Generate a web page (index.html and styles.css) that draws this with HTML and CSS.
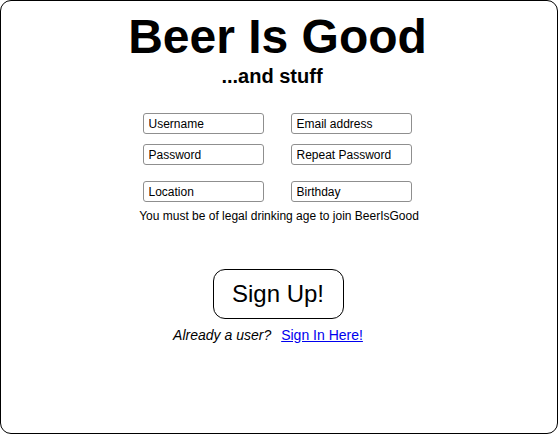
FILE: index.html
```html
<!DOCTYPE html>
<html>
<head>
<meta charset="utf-8">
<link rel="stylesheet" href="styles.css">
</head>
<body>
<div class="card">
  <h1 class="title">Beer Is Good</h1>
  <h2 class="subtitle">...and stuff</h2>
  <form class="form">
    <div class="grid">
      <input class="field" type="text" placeholder="Username">
      <input class="field" type="text" placeholder="Email address">
      <input class="field" type="password" placeholder="Password">
      <input class="field" type="password" placeholder="Repeat Password">
      <input class="field row3" type="text" placeholder="Location">
      <input class="field row3" type="text" placeholder="Birthday">
    </div>
    <p class="note">You must be of legal drinking age to join BeerIsGood</p>
    <button class="signup" type="button">Sign Up!</button>
    <p class="already"><em>Already a user?</em><a href="#" class="link">Sign In Here!</a></p>
  </form>
</div>
</body>
</html>
```
FILE: styles.css
```css
html, body {
  margin: 0;
  padding: 0;
  background: #fff;
}
body {
  font-family: "Liberation Sans", Arial, sans-serif;
  color: #000;
}
.card {
  box-sizing: border-box;
  height: 434px;
  border: 1px solid #000;
  border-radius: 11px;
  padding-top: 8px;
  display: flex;
  flex-direction: column;
  align-items: center;
}
.title {
  margin: 0 3px 0 0;
  font-size: 48px;
  line-height: 56px;
  font-weight: bold;
}
.subtitle {
  margin: 0 14px 0 0;
  font-size: 20px;
  line-height: 22px;
  font-weight: bold;
}
.form {
  margin: 26px 0 0;
  display: flex;
  flex-direction: column;
  align-items: center;
}
.grid {
  display: grid;
  grid-template-columns: 121px 121px;
  column-gap: 27px;
  row-gap: 10px;
  margin-right: 4px;
}
.field {
  box-sizing: border-box;
  width: 121px;
  height: 21px;
  margin: 0;
  padding: 0 4px 0 5px;
  border: 1px solid #8f8f8f;
  border-radius: 3px;
  font-family: "Liberation Sans", Arial, sans-serif;
  font-size: 12px;
  color: #000;
  background: #fff;
  outline: none;
}
.field::placeholder {
  color: #000;
  opacity: 1;
}
.row3 {
  margin-top: 6px;
}
.note {
  margin: 7px 0 0;
  font-size: 12px;
  line-height: 15px;
}
.signup {
  box-sizing: border-box;
  margin: 45px 2px 0 0;
  width: 131px;
  height: 50px;
  padding: 0;
  border: 1px solid #000;
  border-radius: 12px;
  background: #fff;
  font-family: "Liberation Sans", Arial, sans-serif;
  font-size: 24px;
  color: #000;
}
.already {
  margin: 8px 22px 0 0;
  font-size: 14px;
  line-height: 16px;
}
.link {
  margin-left: 10px;
  color: #0000ee;
  text-decoration: underline;
}
```
